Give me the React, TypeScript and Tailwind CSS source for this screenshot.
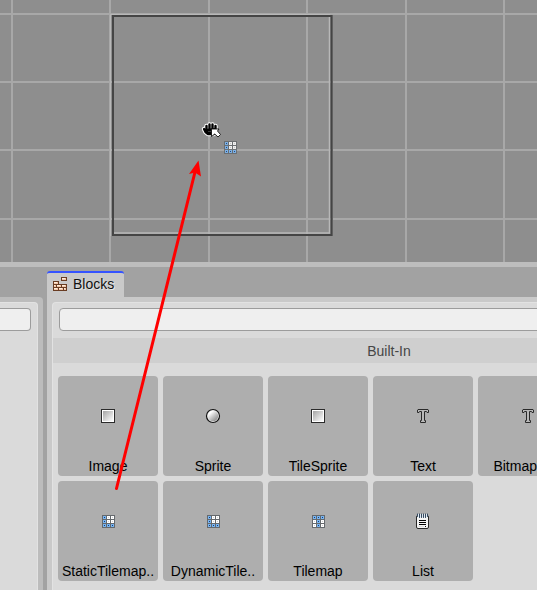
import type { ReactNode } from "react";

const GRID_X = [12, 110, 209, 307, 406, 504];
const GRID_Y = [14, 82, 150, 219];

function ImageIcon() {
  return (
    <svg width="16" height="16" viewBox="0 0 16 16" aria-hidden="true">
      <defs>
        <linearGradient id="imageFill" x1="0" y1="0" x2="1" y2="1">
          <stop offset="0.1" stopColor="#adadad" />
          <stop offset="1" stopColor="#fff" />
        </linearGradient>
      </defs>
      <rect x="1.5" y="1.5" width="13" height="13" fill="#fff" stroke="#2b2b2b" />
      <rect x="3" y="3" width="10" height="10" fill="url(#imageFill)" />
    </svg>
  );
}

function SpriteIcon() {
  return (
    <svg width="16" height="16" viewBox="0 0 16 16" aria-hidden="true">
      <defs>
        <linearGradient id="spriteFill" x1="0.15" y1="0.1" x2="0.85" y2="0.9">
          <stop offset="0.1" stopColor="#fff" />
          <stop offset="1" stopColor="#8c8c8c" />
        </linearGradient>
      </defs>
      <circle cx="8" cy="8" r="6.5" fill="#eee" stroke="#111" strokeWidth="1.2" />
      <circle cx="8" cy="8" r="5.2" fill="url(#spriteFill)" />
    </svg>
  );
}

function TextIcon() {
  return (
    <svg width="16" height="16" viewBox="0 0 16 16" aria-hidden="true">
      <path
        d="M3 1.5H13L13.5 2V4.5H12L11.5 3.5H9.5V12.5H10.5V14.5H5.5V12.5H6.5V3.5H4.5L4 4.5H2.5V2Z"
        fill="#b8b8b8"
        stroke="#2a2a2a"
        strokeLinejoin="round"
      />
    </svg>
  );
}

function TileIcon({ blue }: { blue: number[] }) {
  return (
    <svg width="16" height="16" viewBox="0 0 16 16" shapeRendering="crispEdges" aria-hidden="true">
      <rect x="2" y="2" width="13" height="13" fill="#65696d" />
      {Array.from({ length: 9 }, (_, i) => {
        const x = 3 + (i % 3) * 4;
        const y = 3 + Math.floor(i / 3) * 4;
        const on = blue.includes(i);
        return (
          <g key={i}>
            <rect x={x} y={y} width="3" height="3" fill={on ? "#79b5f1" : "#fff"} />
            <rect x={x + 1} y={y + 1} width="1" height="1" fill={on ? "#123e7c" : "#d0d0d0"} />
          </g>
        );
      })}
    </svg>
  );
}

function ListIcon() {
  return (
    <svg width="16" height="16" viewBox="0 0 16 16" aria-hidden="true">
      <rect x="1.5" y="2.5" width="12" height="13" rx="1.5" fill="#f4f4f4" stroke="#292929" />
      <path d="M2 1H13V4.5H2Z" fill="#dfe8f0" />
      <path
        d="M2.5 1V3.5M4.5 1V4.5M6.5 1V4.5M8.5 1V4.5M10.5 1V4.5M12.5 1V3.5"
        stroke="#34495f"
        strokeLinecap="round"
      />
      <path d="M4 7.5H11M4 9.5H11M4 11.5H11" stroke="#000" />
      <path d="M10 13.5H11" stroke="#111" />
      <path d="M3.5 13.5H9" stroke="#ddd" />
    </svg>
  );
}

function BricksIcon() {
  const bricks = [
    [8, 0, 6, 4],
    [0, 4, 6, 4],
    [0, 7, 4, 4],
    [3, 7, 6, 4],
    [8, 7, 6, 4],
    [0, 10, 6, 4],
    [5, 10, 6, 4],
    [10, 10, 4, 4],
  ];
  return (
    <svg width="14" height="14" viewBox="0 0 14 14" shapeRendering="crispEdges" aria-hidden="true">
      {bricks.map(([x, y, w, h]) => (
        <g key={`${x}-${y}`}>
          <rect x={x} y={y} width={w} height={h} fill="#693c22" />
          <rect x={x + 1} y={y + 1} width={w - 2} height={h - 2} fill="#f3c8ab" />
          <rect x={x + 1} y={y + 1} width={w - 3} height="1" fill="#fff0df" />
        </g>
      ))}
    </svg>
  );
}

function DragCursor() {
  const hand =
    "M204 129L205.5 132L208 134H214L215.5 128M206.5 126V130M209.5 124.5V129M212.5 124.5V129M215.5 126V129";
  return (
    <>
      <path
        d={hand}
        fill="none"
        stroke="#fff"
        strokeWidth="4.4"
        strokeLinecap="round"
        strokeLinejoin="round"
      />
      <path
        d={hand}
        fill="#000"
        stroke="#000"
        strokeWidth="2.4"
        strokeLinecap="round"
        strokeLinejoin="round"
      />
      <path d="M206 129H215L214 133H207.5Z" fill="#000" />
      <path d="M208 131.5H212" stroke="#555" strokeWidth="0.7" />
      <path
        d="M211.5 129H219L217.5 131L220.5 134.5L218 137L214.8 134L211.5 136.5Z"
        fill="#fff"
        stroke="#111"
        strokeWidth="0.9"
      />
    </>
  );
}

function SceneCanvas() {
  return (
    <main className="h-[262px] shrink-0 overflow-hidden bg-[#8e8e8e]">
      <svg className="block" width="100%" height="262" role="img" aria-label="Scene">
        <g stroke="#a8a8a8" strokeWidth="2">
          {GRID_X.map((x) => (
            <line key={x} x1={x} x2={x} y1="0" y2="262" />
          ))}
          {GRID_Y.map((y) => (
            <line key={y} x1="0" x2="100%" y1={y} y2={y} />
          ))}
        </g>
        <path d="M110.5 236V14.5H330" fill="none" stroke="#b8b8b8" />
        <path d="M329.5 14V233H114" fill="none" stroke="#b8b8b8" strokeWidth="1.5" />
        <rect x="113" y="16" width="218.5" height="219" fill="none" stroke="#454545" strokeWidth="2" />
        <path d="M332.5 15V236" stroke="#606060" />
        <DragCursor />
        <g transform="translate(222 139)" opacity="0.85">
          <TileIcon blue={[0, 3, 6, 7, 8]} />
        </g>
      </svg>
    </main>
  );
}

const BLOCKS: { label: string; icon: ReactNode }[] = [
  { label: "Image", icon: <ImageIcon /> },
  { label: "Sprite", icon: <SpriteIcon /> },
  { label: "TileSprite", icon: <ImageIcon /> },
  { label: "Text", icon: <TextIcon /> },
  { label: "BitmapText", icon: <TextIcon /> },
  { label: "StaticTilemap..", icon: <TileIcon blue={[0, 3, 6, 7, 8]} /> },
  { label: "DynamicTile..", icon: <TileIcon blue={[0, 3, 6, 7, 8]} /> },
  { label: "Tilemap", icon: <TileIcon blue={[0, 1, 2, 4, 7]} /> },
  { label: "List", icon: <ListIcon /> },
];

export default function App() {
  return (
    <div className="relative flex h-screen flex-col overflow-hidden bg-[#a2a2a2] font-['Liberation_Sans',Arial,sans-serif] text-sm text-black">
      <SceneCanvas />
      <div className="h-[5px] shrink-0 bg-[#bdbdbd]" />

      <div className="flex min-h-0 flex-1 gap-1 pt-1">
        <aside className="mt-[26px] w-[43px] shrink-0 rounded-tr bg-[#bcbcbc] pt-[5px] pr-[5px]">
          <div className="h-full rounded-tr border-t border-r border-[#e2e2e2] bg-[#dadada] pt-[5px] pr-1.5">
            <input
              type="text"
              aria-label="Filter files"
              className="block h-[23px] w-full rounded-r border border-l-0 border-[#9c9c9c] bg-[#efefef] outline-none"
            />
          </div>
        </aside>

        <section className="flex w-[684px] shrink-0 flex-col">
          <div role="tablist" className="flex h-[26px] shrink-0">
            <button
              type="button"
              role="tab"
              aria-selected="true"
              className="flex w-[77px] items-center gap-1.5 rounded-t-[3px] border-t-2 border-[#3553ff] bg-[#c9c9c9] pb-0.5 pl-1.5 text-[#111] [text-shadow:1px_1px_0_#e6e6e6]"
            >
              <BricksIcon />
              Blocks
            </button>
          </div>

          <div className="min-h-0 flex-1 bg-[#c9c9c9] pt-[5px] pl-[5px]">
            <div className="h-full rounded-tl border-t border-l border-[#e2e2e2] bg-[#dadada] pt-[5px]">
              <div className="px-1.5">
                <input
                  type="text"
                  aria-label="Filter blocks"
                  className="block h-[23px] w-full rounded border border-[#9c9c9c] bg-[#efefef] px-2 outline-none"
                />
              </div>
              <h2 className="mt-[7px] mr-1.5 h-[25px] bg-[#cfcfcf] text-center leading-[26px] text-[#464646]">
                Built-In
              </h2>
              <div className="mt-[13px] grid grid-cols-[repeat(5,100px)] gap-[5px] pl-[5px]">
                {BLOCKS.map(({ label, icon }) => (
                  <button
                    key={label}
                    type="button"
                    className="flex h-[100px] flex-col items-center justify-between rounded bg-[#aeaeae] pt-8 leading-5"
                  >
                    {icon}
                    <span>{label}</span>
                  </button>
                ))}
              </div>
            </div>
          </div>
        </section>
      </div>

      <svg
        className="pointer-events-none absolute top-0 left-0"
        width="240"
        height="500"
        viewBox="0 0 240 500"
        aria-hidden="true"
      >
        <path d="M116.5 488.5L195 172" stroke="#f00" strokeWidth="3" strokeLinecap="round" />
        <path d="M198.5 160.5L201 176.5L195 172.5L189 174Z" fill="#f00" />
      </svg>
    </div>
  );
}
